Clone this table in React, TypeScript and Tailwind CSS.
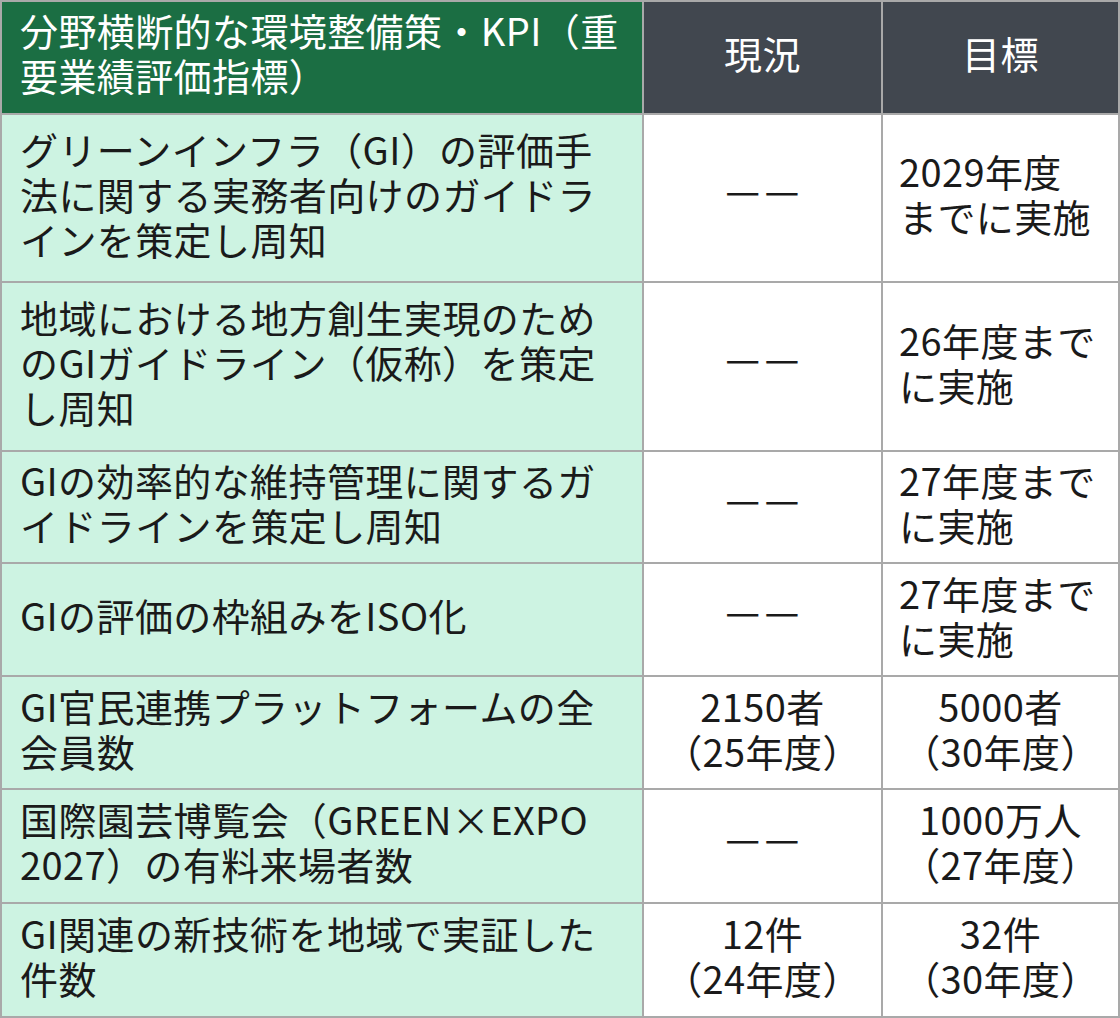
const rows: { item: string[]; now: string[]; goal: string[]; goalCenter?: boolean }[] = [
  {
    item: ["グリーンインフラ（GI）の評価手", "法に関する実務者向けのガイドラ", "インを策定し周知"],
    now: ["——"],
    goal: ["2029年度", "までに実施"],
  },
  {
    item: ["地域における地方創生実現のため", "のGIガイドライン（仮称）を策定", "し周知"],
    now: ["——"],
    goal: ["26年度まで", "に実施"],
  },
  {
    item: ["GIの効率的な維持管理に関するガ", "イドラインを策定し周知"],
    now: ["——"],
    goal: ["27年度まで", "に実施"],
  },
  {
    item: ["GIの評価の枠組みをISO化"],
    now: ["——"],
    goal: ["27年度まで", "に実施"],
  },
  {
    item: ["GI官民連携プラットフォームの全", "会員数"],
    now: ["2150者", "（25年度）"],
    goal: ["5000者", "（30年度）"],
    goalCenter: true,
  },
  {
    item: ["国際園芸博覧会（GREEN×EXPO", "2027）の有料来場者数"],
    now: ["——"],
    goal: ["1000万人", "（27年度）"],
    goalCenter: true,
  },
  {
    item: ["GI関連の新技術を地域で実証した", "件数"],
    now: ["12件", "（24年度）"],
    goal: ["32件", "（30年度）"],
    goalCenter: true,
  },
];

function Lines({ lines }: { lines: string[] }) {
  return (
    <>
      {lines.map((l, i) => (
        <span key={i} className="block">
          {l}
        </span>
      ))}
    </>
  );
}

// the reference shows the two dashes as separate strokes with a small gap
function EmptyMark() {
  return (
    <div className="bg-white flex items-center justify-center gap-[4px] text-[39px] leading-none pb-[20px]">
      <span>—</span>
      <span>—</span>
    </div>
  );
}

export default function App() {
  return (
    <div
      className="w-[1120px] h-[1018px] bg-[#a9a9a9] p-[2px] grid grid-cols-[640px_237px_235px] grid-rows-[111px_166px_167px_110px_111px_111px_112px_112px] gap-[2px] text-[38px] leading-[45px] tracking-[0.4px] text-[#1a1a1a] whitespace-nowrap"
      style={{ fontFamily: '"Noto Sans CJK JP", "Noto Sans", sans-serif' }}
    >
      <div className="bg-[#1b6e43] text-white flex items-center pl-[18px] pb-[12px]">
        <div>
          <span className="block">分野横断的な環境整備策・KPI（重</span>
          <span className="block">要業績評価指標）</span>
        </div>
      </div>
      <div className="bg-[#41474f] text-white flex items-center justify-center pb-[10px]">現況</div>
      <div className="bg-[#41474f] text-white flex items-center justify-center pb-[10px]">目標</div>

      {rows.map((r, i) => (
        <div key={i} className="contents">
          <div className="bg-[#cdf3e2] flex items-center pl-[18px] pb-[10px]">
            <div>
              <Lines lines={r.item} />
            </div>
          </div>
          {r.now[0] === "——" ? (
            <EmptyMark />
          ) : (
            <div className="bg-white flex items-center justify-center text-center pb-[10px]">
              <div>
                <Lines lines={r.now} />
              </div>
            </div>
          )}
          {r.goalCenter ? (
            <div className="bg-white flex items-center justify-center text-center pb-[10px]">
              <div>
                <Lines lines={r.goal} />
              </div>
            </div>
          ) : (
            <div className="bg-white flex items-center pl-[16px] pb-[10px]">
              <div>
                <Lines lines={r.goal} />
              </div>
            </div>
          )}
        </div>
      ))}
    </div>
  );
}
